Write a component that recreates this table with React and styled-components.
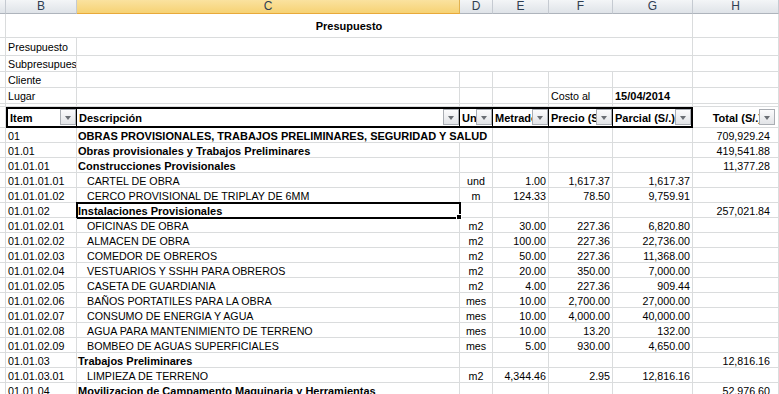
import React from 'react'
import styled, { createGlobalStyle } from 'styled-components'

const GlobalStyle = createGlobalStyle`
  html, body {
    margin: 0;
    padding: 0;
    background: #fff;
    overflow: hidden;
  }
  body {
    width: 779px;
    height: 394px;
  }
`

const GRID = '#dadcdd'
const COLS = [6, 71, 383, 33, 56, 64, 80, 86]
const LETTERS = ['', 'B', 'C', 'D', 'E', 'F', 'G', 'H']

const Sheet = styled.table`
  border-collapse: separate;
  border-spacing: 0;
  table-layout: fixed;
  width: 779px;
  font-family: "Liberation Sans", Arial, sans-serif;
  font-size: 10.7px;
  color: #000;
`

const Row = styled.tr`
  height: ${p => p.$h}px;
`

const ColHead = styled.th`
  height: 13px;
  padding: 0;
  font-family: "Liberation Sans", Arial, sans-serif;
  font-weight: 400;
  font-size: 12px;
  line-height: 13px;
  color: #2f3e52;
  text-align: center;
  border-right: 1px solid ${p => (p.$active ? '#e2b24f' : '#c5cad1')};
  border-bottom: 1px solid ${p => (p.$active ? '#e8a93a' : '#aeb4bc')};
  background: ${p => (p.$active
    ? 'linear-gradient(#fae29f, #f6d274)'
    : 'linear-gradient(#f3f5f7, #dfe3e8)')};
  overflow: hidden;
`

const Cell = styled.td`
  position: relative;
  padding: ${p => p.$padT ?? 0}px ${p => p.$padR ?? 2}px 0 ${p => p.$padL ?? 2}px;
  line-height: 12px;
  white-space: nowrap;
  overflow: ${p => (p.$selected || p.$spill ? 'visible' : 'hidden')};
  text-align: ${p => p.$align || 'left'};
  font-weight: ${p => (p.$bold ? 700 : 400)};
  font-size: ${p => (p.$bold ? '11px' : 'inherit')};
  border-right: 1px solid ${GRID};
  border-bottom: 1px solid ${GRID};
  outline: ${p => (p.$selected ? '2px solid #000' : 'none')};
  outline-offset: -1px;

  ${p => p.$selected && `
    &::after {
      content: '';
      position: absolute;
      right: -3px;
      bottom: -3px;
      width: 4px;
      height: 4px;
      background: #000;
      border: 1px solid #fff;
      z-index: 2;
    }
  `}
`

const HeadCell = styled.td`
  position: relative;
  padding: 1px ${p => (p.$plain ? 16 : 2)}px 0 2px;
  line-height: 14px;
  font-weight: 700;
  font-size: 11px;
  white-space: nowrap;
  overflow: hidden;
  text-align: ${p => p.$align || 'left'};
  border-top: ${p => (p.$plain ? 'none' : '2px solid #000')};
  border-bottom: ${p => (p.$plain ? `1px solid ${GRID}` : '2px solid #000')};
  border-left: ${p => (p.$first ? '2px solid #000' : 'none')};
  border-right: ${p => (p.$plain ? `1px solid ${GRID}` : p.$last ? '2px solid #000' : '1px solid #000')};
`

const Drop = styled.span`
  position: absolute;
  right: ${p => (p.$inset ? 3 : 0)}px;
  top: ${p => (p.$inset ? 2 : 0)}px;
  width: 14px;
  height: 14px;
  border: 1px solid #a9adb3;
  background: linear-gradient(#fbfbfc, #e2e4e7);
  display: flex;
  align-items: center;
  justify-content: center;

  &::after {
    content: '';
    border-left: 3.5px solid transparent;
    border-right: 3.5px solid transparent;
    border-top: 4px solid #6a6e74;
    margin-top: 1px;
  }
`

const HeadLabel = ({ children, align, first, last, plain }) => (
  <HeadCell $align={align} $first={first} $last={last} $plain={plain}>
    {children}
    <Drop $inset={plain} />
  </HeadCell>
)

const Blanks = ({ n }) => Array.from({ length: n }, (_, i) => <Cell key={i} />)

const items = [
  { code: '01', desc: 'OBRAS PROVISIONALES, TRABAJOS PRELIMINARES, SEGURIDAD Y SALUD', bold: true, wide: true, total: '709,929.24' },
  { code: '01.01', desc: 'Obras provisionales y Trabajos Preliminares', bold: true, total: '419,541.88' },
  { code: '01.01.01', desc: 'Construcciones Provisionales', bold: true, total: '11,377.28' },
  { code: '01.01.01.01', desc: 'CARTEL DE OBRA', unit: 'und', qty: '1.00', price: '1,617.37', part: '1,617.37' },
  { code: '01.01.01.02', desc: 'CERCO PROVISIONAL DE TRIPLAY DE 6MM', unit: 'm', qty: '124.33', price: '78.50', part: '9,759.91' },
  { code: '01.01.02', desc: 'Instalaciones Provisionales', bold: true, selected: true, total: '257,021.84' },
  { code: '01.01.02.01', desc: 'OFICINAS DE OBRA', unit: 'm2', qty: '30.00', price: '227.36', part: '6,820.80' },
  { code: '01.01.02.02', desc: 'ALMACEN DE OBRA', unit: 'm2', qty: '100.00', price: '227.36', part: '22,736.00' },
  { code: '01.01.02.03', desc: 'COMEDOR DE OBREROS', unit: 'm2', qty: '50.00', price: '227.36', part: '11,368.00' },
  { code: '01.01.02.04', desc: 'VESTUARIOS Y SSHH PARA OBREROS', unit: 'm2', qty: '20.00', price: '350.00', part: '7,000.00' },
  { code: '01.01.02.05', desc: 'CASETA DE GUARDIANIA', unit: 'm2', qty: '4.00', price: '227.36', part: '909.44' },
  { code: '01.01.02.06', desc: 'BAÑOS PORTATILES PARA LA OBRA', unit: 'mes', qty: '10.00', price: '2,700.00', part: '27,000.00' },
  { code: '01.01.02.07', desc: 'CONSUMO DE ENERGIA Y AGUA', unit: 'mes', qty: '10.00', price: '4,000.00', part: '40,000.00' },
  { code: '01.01.02.08', desc: 'AGUA PARA MANTENIMIENTO DE TERRENO', unit: 'mes', qty: '10.00', price: '13.20', part: '132.00' },
  { code: '01.01.02.09', desc: 'BOMBEO DE AGUAS SUPERFICIALES', unit: 'mes', qty: '5.00', price: '930.00', part: '4,650.00' },
  { code: '01.01.03', desc: 'Trabajos Preliminares', bold: true, total: '12,816.16' },
  { code: '01.01.03.01', desc: 'LIMPIEZA DE TERRENO', unit: 'm2', qty: '4,344.46', price: '2.95', part: '12,816.16' },
  { code: '01.01.04', desc: 'Movilizacion de Campamento Maquinaria y Herramientas', bold: true, total: '52,976.60' },
]

const ItemRow = ({ it }) => (
  <Row $h={15}>
    <Cell />
    <Cell $padT={1}>{it.code}</Cell>
    <Cell
      colSpan={it.wide ? 2 : 1}
      $padT={1}
      $bold={it.bold}
      $selected={it.selected}
      $spill={it.wide}
      $padL={it.bold ? 1 : 10}
    >
      {it.desc}
    </Cell>
    {!it.wide && <Cell $padT={1} $align="center" $padL={0} $padR={0}>{it.unit}</Cell>}
    <Cell $padT={1} $align="right">{it.qty}</Cell>
    <Cell $padT={1} $align="right">{it.price}</Cell>
    <Cell $padT={1} $align="right">{it.part}</Cell>
    <Cell $padT={1} $align="right" $padR={8}>{it.total}</Cell>
  </Row>
)

export default function App() {
  return (
    <>
      <GlobalStyle />
      <Sheet>
        <colgroup>
          {COLS.map((w, i) => <col key={i} style={{ width: w }} />)}
        </colgroup>
        <thead>
          <tr>
            {LETTERS.map((l, i) => <ColHead key={i} $active={l === 'C'}>{l}</ColHead>)}
          </tr>
        </thead>
        <tbody>
          <Row $h={24}>
            <Cell />
            <Cell colSpan={6} $align="center" $bold>Presupuesto</Cell>
            <Cell />
          </Row>
          <Row $h={18}>
            <Cell />
            <Cell>Presupuesto</Cell>
            <Cell colSpan={5} />
            <Cell />
          </Row>
          <Row $h={16}>
            <Cell />
            <Cell $padR={0}>Subpresupuesto</Cell>
            <Cell colSpan={5} />
            <Cell />
          </Row>
          <Row $h={16}>
            <Cell />
            <Cell>Cliente</Cell>
            <Blanks n={6} />
          </Row>
          <Row $h={16}>
            <Cell />
            <Cell>Lugar</Cell>
            <Blanks n={3} />
            <Cell>Costo al</Cell>
            <Cell $bold>15/04/2014</Cell>
            <Cell />
          </Row>
          <Row $h={3}>
            <Blanks n={8} />
          </Row>
          <Row $h={21}>
            <Cell />
            <HeadLabel first>Item</HeadLabel>
            <HeadLabel>Descripción</HeadLabel>
            <HeadLabel>Und.</HeadLabel>
            <HeadLabel>Metrado</HeadLabel>
            <HeadLabel>Precio (S/.)</HeadLabel>
            <HeadLabel last>Parcial (S/.)</HeadLabel>
            <HeadLabel plain align="right">Total (S/.)</HeadLabel>
          </Row>
          {items.map(it => <ItemRow key={it.code} it={it} />)}
        </tbody>
      </Sheet>
    </>
  )
}
